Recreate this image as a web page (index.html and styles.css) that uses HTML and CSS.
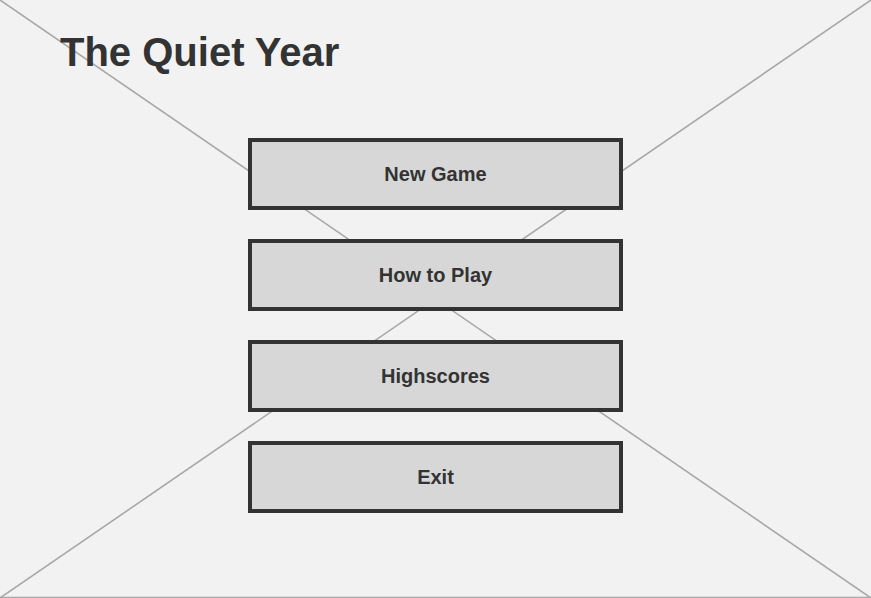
FILE: index.html
```html
<!DOCTYPE html>
<html>
<head>
<meta charset="utf-8">
<link rel="stylesheet" href="styles.css">
</head>
<body>
<div class="screen">
  <svg class="placeholder" viewBox="0 0 871 598" preserveAspectRatio="none" aria-hidden="true">
    <line x1="0" y1="0" x2="871" y2="598" />
    <line x1="871" y1="0" x2="0" y2="598" />
    <line x1="0" y1="597.5" x2="871" y2="597.5" />
  </svg>
  <h1 class="title">The Quiet Year</h1>
  <nav class="menu">
    <div class="btn">New Game</div>
    <div class="btn">How to Play</div>
    <div class="btn">Highscores</div>
    <div class="btn">Exit</div>
  </nav>
</div>
</body>
</html>
```
FILE: styles.css
```css
html, body {
  margin: 0;
  padding: 0;
  background: #f2f2f2;
}
.screen {
  position: relative;
  width: 871px;
  height: 598px;
  overflow: hidden;
  background: #f2f2f2;
  font-family: "Liberation Sans", Arial, sans-serif;
  color: #333333;
}
.placeholder {
  position: absolute;
  left: 0;
  top: 0;
  width: 871px;
  height: 598px;
}
.placeholder line {
  stroke: #a8a8a8;
  stroke-width: 1.6;
}
.title {
  position: relative;
  margin: 0;
  padding: 28px 0 0 60px;
  font-size: 40px;
  line-height: 48px;
  font-weight: bold;
}
.menu {
  position: relative;
  display: flex;
  flex-direction: column;
  gap: 29px;
  width: 375px;
  margin: 62px 0 0 248px;
}
.btn {
  box-sizing: border-box;
  height: 72px;
  border: 4px solid #333333;
  background: #d7d7d7;
  display: flex;
  align-items: center;
  justify-content: center;
  font-size: 20px;
  font-weight: bold;
  color: #333333;
}
```
